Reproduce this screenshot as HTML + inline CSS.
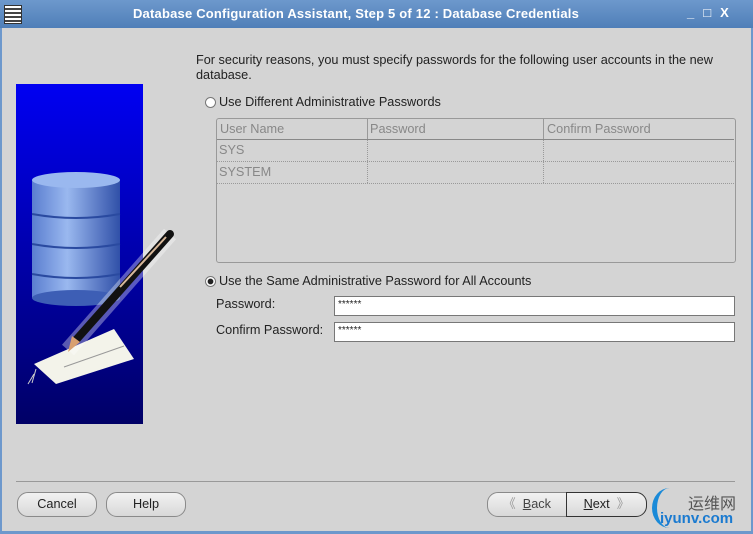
<!DOCTYPE html>
<html><head><style>
body{margin:0;width:753px;height:534px;overflow:hidden;background:#d4d4d4;font-family:"Liberation Sans",sans-serif;font-size:12.7px;color:#222;position:relative}
.a{position:absolute}
.btn{position:absolute;height:23px;border:1px solid #8a8a8a;border-radius:11px;background:linear-gradient(#f2f2f2,#d8d8d8);text-align:center;line-height:23px;font-size:12.7px}
.radio{position:absolute;width:9px;height:9px;border-radius:50%;border:1px solid #777;background:#fff}
.fld{position:absolute;left:334px;width:401px;height:20px;background:#fff;border:1px solid #777;font-size:10px;line-height:16px;padding-left:3px;box-sizing:border-box}
.dot{border-bottom:1px dotted #999}
</style></head><body>
<div class="a" style="left:0;top:0;width:753px;height:28px;background:linear-gradient(#6d98cc,#4f7fb8);"></div>
<div class="a" style="left:4px;top:5px;width:16px;height:17px;background:repeating-linear-gradient(#fff 0 2px,#444 2px 4px);border:1px solid #333"></div>
<div class="a" style="left:0;top:6px;width:712px;text-align:center;color:#fff;font-weight:bold;font-size:13px;letter-spacing:0.2px">Database Configuration Assistant, Step 5 of 12 : Database Credentials</div>
<div class="a" style="left:687px;top:5px;color:#fff;font-size:13px;font-weight:bold;letter-spacing:9px">_□X</div>
<div class="a" style="left:0;top:28px;width:2px;height:506px;background:#6d98cc"></div>
<div class="a" style="left:751px;top:28px;width:2px;height:506px;background:#6d98cc"></div>
<div class="a" style="left:0;top:531px;width:753px;height:3px;background:#6d98cc"></div>

<svg class="a" style="left:16px;top:84px;overflow:visible" width="127" height="340">
<defs><linearGradient id="bg" x1="0" y1="0" x2="0" y2="1"><stop offset="0" stop-color="#0000f2"/><stop offset="1" stop-color="#000066"/></linearGradient>
<linearGradient id="cy" x1="0" x2="1"><stop offset="0" stop-color="#5a7ed0"/><stop offset=".4" stop-color="#9ab8ef"/><stop offset="1" stop-color="#3050a8"/></linearGradient></defs>
<rect width="127" height="340" fill="url(#bg)"/>
<rect x="16" y="96" width="88" height="118" fill="url(#cy)"/>
<ellipse cx="60" cy="214" rx="44" ry="8" fill="#3d5eb5"/>
<ellipse cx="60" cy="96" rx="44" ry="8" fill="#9ab8ef"/>
<path d="M16 130 Q60 138 104 130 M16 160 Q60 168 104 160 M16 190 Q60 198 104 190" stroke="#2a4aa0" stroke-width="2" fill="none"/>
<polygon points="18,280 98,245 118,275 40,300" fill="#f3f3ea"/>
<line x1="48" y1="283" x2="108" y2="262" stroke="#999"/>
<path d="M18 290 l-6 10 M20 285 l-4 14" stroke="#ccc"/>
<line x1="52" y1="266" x2="154" y2="150" stroke="#fff" stroke-width="16" opacity=".35"/>
<line x1="60" y1="256" x2="154" y2="150" stroke="#111" stroke-width="8" stroke-linecap="round"/>
<line x1="104" y1="203" x2="150" y2="153" stroke="#d8b89a" stroke-width="2"/>
<polygon points="52,268 56,252 64,258" fill="#d8a070"/>
</svg>

<div class="a" style="left:196px;top:53px;width:545px;line-height:15px">For security reasons, you must specify passwords for the following user accounts in the new database.</div>
<div class="radio" style="left:205px;top:97px"></div>
<div class="a" style="left:219px;top:95px">Use Different Administrative Passwords</div>

<div class="a" style="left:216px;top:118px;width:518px;height:143px;border:1px solid #999;border-radius:3px;color:#888"></div>
<div class="a" style="left:217px;top:119px;width:517px;height:20px;border-bottom:1px solid #888;color:#888">
 <span class="a" style="left:3px;top:3px">User Name</span><span class="a" style="left:150px;top:0;height:20px;border-left:1px solid #999"></span>
 <span class="a" style="left:153px;top:3px">Password</span><span class="a" style="left:326px;top:0;height:20px;border-left:1px solid #999"></span>
 <span class="a" style="left:330px;top:3px">Confirm Password</span></div>
<div class="a dot" style="left:217px;top:140px;width:517px;height:21px;color:#888"><span class="a" style="left:2px;top:3px">SYS</span></div>
<div class="a dot" style="left:217px;top:162px;width:517px;height:21px;color:#888"><span class="a" style="left:2px;top:3px">SYSTEM</span></div>
<div class="a" style="left:367px;top:140px;height:43px;border-left:1px dotted #999"></div>
<div class="a" style="left:543px;top:140px;height:43px;border-left:1px dotted #999"></div>

<div class="radio" style="left:205px;top:276px;background:radial-gradient(#222 40%,#fff 50%)"></div>
<div class="a" style="left:219px;top:274px">Use the Same Administrative Password for All Accounts</div>
<div class="a" style="left:216px;top:297px">Password:</div>
<div class="fld" style="top:296px">******</div>
<div class="a" style="left:216px;top:323px">Confirm Password:</div>
<div class="fld" style="top:322px">******</div>

<div class="a" style="left:16px;top:481px;width:719px;border-top:1px solid #999"></div>
<div class="btn" style="left:17px;top:492px;width:78px">Cancel</div>
<div class="btn" style="left:106px;top:492px;width:78px">Help</div>
<div class="btn" style="left:487px;top:492px;width:78px;border-radius:11px 0 0 11px;color:#444"><span style="color:#999">《</span>&nbsp; <u>B</u>ack</div>
<div class="btn" style="left:566px;top:492px;width:79px;border-radius:0 11px 11px 0;border-color:#333"><u>N</u>ext &nbsp;<span style="color:#999">》</span></div>
<div class="a" style="left:652px;top:488px;width:30px;height:40px;border-left:5px solid #1a8ad8;border-radius:50%"></div>
<div class="a" style="left:688px;top:490px;font-size:16px;font-family:'Noto Sans CJK SC',sans-serif;color:#555">运维网</div>
<div class="a" style="left:660px;top:510px;font-size:15px;font-weight:bold;color:#1a7ad0">iyunv.com</div>
</body></html>
